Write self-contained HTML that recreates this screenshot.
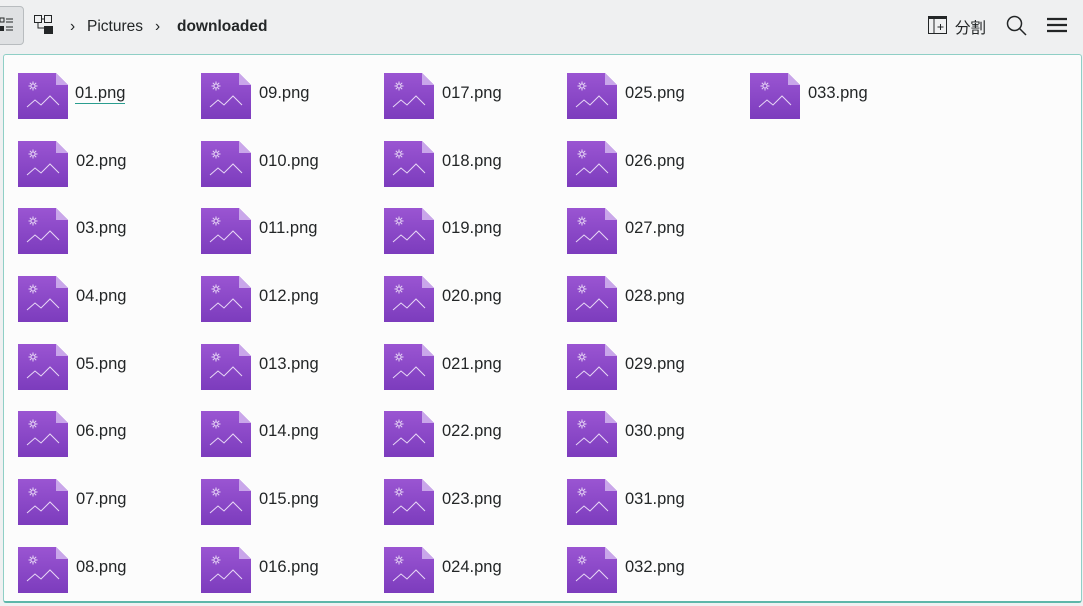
<!DOCTYPE html>
<html><head><meta charset="utf-8">
<style>
html,body{margin:0;padding:0;width:1083px;height:606px;overflow:hidden;background:#eff0f1;font-family:"Liberation Sans","Noto Sans CJK JP",sans-serif;color:#232627}
.tb{position:absolute;left:0;top:0;width:1083px;height:52px}
.frame{position:absolute;left:3px;top:54px;width:1077px;height:546px;background:#fcfcfc;border:1px solid #8fcfc6;border-bottom:2px solid #5db6a9;border-radius:3px}
.it{position:absolute;height:46px}
.it svg{position:absolute;left:0;top:0}
.it span{position:absolute;left:58px;top:11px;font-size:16.5px;white-space:nowrap}
</style></head><body>
<svg width="0" height="0" style="position:absolute"><defs>
<linearGradient id="g" x1="0" y1="0" x2="0" y2="1"><stop offset="0" stop-color="#9a55d2"/><stop offset="1" stop-color="#7c3cbd"/></linearGradient>
<symbol id="ic" viewBox="0 0 50 46">
<path d="M0 0H38L50 12V46H0Z" fill="url(#g)"/>
<path d="M38 0L50 12H38Z" fill="#c9a6ea"/>
<g stroke="#e8d8f6" stroke-width="1" fill="none">
<circle cx="15" cy="13" r="2"/>
<path d="M15 8.5v2M15 15.5v2M10.5 13h2M17.5 13h2M11.8 9.8l1.4 1.4M16.8 14.8l1.4 1.4M18.2 9.8l-1.4 1.4M13.2 14.8l-1.4 1.4"/>
<path d="M9 34L17 27L23 32L32 23L41 32"/>
</g></symbol></defs></svg>
<div class="tb">
<div style="position:absolute;left:-4px;top:6px;width:26px;height:37px;border:1px solid #b8bcbf;border-radius:4px;background:#dfe1e3"></div>
<svg style="position:absolute;left:0;top:17px" width="14" height="16"><rect x="0" y="1" width="4" height="4" fill="none" stroke="#232627"/><rect x="0" y="9" width="4" height="5" fill="#232627"/><path d="M6 2h7M6 5h7M6 10h7M6 13h7" stroke="#232627"/></svg>
<svg style="position:absolute;left:34px;top:15px" width="22" height="20"><rect x="0.5" y="0.5" width="7" height="7" fill="none" stroke="#232627"/><rect x="10.5" y="0.5" width="7" height="7" fill="none" stroke="#232627"/><path d="M8 4h2M4 8v5h6" stroke="#232627" fill="none"/><rect x="10" y="11" width="9" height="8" fill="#232627"/></svg>
<div style="position:absolute;left:70px;top:18px;font-size:15.5px">›</div>
<div style="position:absolute;left:87px;top:18px;font-size:15.5px">Pictures</div>
<div style="position:absolute;left:155px;top:18px;font-size:15.5px">›</div>
<div style="position:absolute;left:177px;top:18px;font-size:15.5px;font-weight:bold">downloaded</div>
<svg style="position:absolute;left:928px;top:16px" width="20" height="19"><rect x="0.5" y="0.5" width="18" height="17" fill="none" stroke="#232627"/><rect x="0" y="0" width="19" height="3" fill="#232627"/><path d="M6 3v15M12.5 8v6M9.5 11h6" stroke="#232627"/></svg>
<div style="position:absolute;left:955px;top:16px;font-size:15.5px">分割</div>
<svg style="position:absolute;left:1006px;top:15px" width="22" height="22"><circle cx="8.5" cy="8.5" r="7" fill="none" stroke="#232627" stroke-width="1.5"/><path d="M13.5 13.5L20 20" stroke="#232627" stroke-width="1.5"/></svg>
<svg style="position:absolute;left:1047px;top:17px" width="21" height="16"><path d="M0 2h20M0 8h20M0 14h20" stroke="#232627" stroke-width="2.2"/></svg>
</div>
<div class="frame"></div>

<div class="it" style="left:18px;top:73px"><svg width="50" height="46"><use href="#ic"/></svg><span style="border-bottom:1px solid #2a9d8f;left:57px">01.png</span></div>
<div class="it" style="left:18px;top:141px"><svg width="50" height="46"><use href="#ic"/></svg><span>02.png</span></div>
<div class="it" style="left:18px;top:208px"><svg width="50" height="46"><use href="#ic"/></svg><span>03.png</span></div>
<div class="it" style="left:18px;top:276px"><svg width="50" height="46"><use href="#ic"/></svg><span>04.png</span></div>
<div class="it" style="left:18px;top:344px"><svg width="50" height="46"><use href="#ic"/></svg><span>05.png</span></div>
<div class="it" style="left:18px;top:411px"><svg width="50" height="46"><use href="#ic"/></svg><span>06.png</span></div>
<div class="it" style="left:18px;top:479px"><svg width="50" height="46"><use href="#ic"/></svg><span>07.png</span></div>
<div class="it" style="left:18px;top:547px"><svg width="50" height="46"><use href="#ic"/></svg><span>08.png</span></div>

<div class="it" style="left:201px;top:73px"><svg width="50" height="46"><use href="#ic"/></svg><span>09.png</span></div>
<div class="it" style="left:201px;top:141px"><svg width="50" height="46"><use href="#ic"/></svg><span>010.png</span></div>
<div class="it" style="left:201px;top:208px"><svg width="50" height="46"><use href="#ic"/></svg><span>011.png</span></div>
<div class="it" style="left:201px;top:276px"><svg width="50" height="46"><use href="#ic"/></svg><span>012.png</span></div>
<div class="it" style="left:201px;top:344px"><svg width="50" height="46"><use href="#ic"/></svg><span>013.png</span></div>
<div class="it" style="left:201px;top:411px"><svg width="50" height="46"><use href="#ic"/></svg><span>014.png</span></div>
<div class="it" style="left:201px;top:479px"><svg width="50" height="46"><use href="#ic"/></svg><span>015.png</span></div>
<div class="it" style="left:201px;top:547px"><svg width="50" height="46"><use href="#ic"/></svg><span>016.png</span></div>

<div class="it" style="left:384px;top:73px"><svg width="50" height="46"><use href="#ic"/></svg><span>017.png</span></div>
<div class="it" style="left:384px;top:141px"><svg width="50" height="46"><use href="#ic"/></svg><span>018.png</span></div>
<div class="it" style="left:384px;top:208px"><svg width="50" height="46"><use href="#ic"/></svg><span>019.png</span></div>
<div class="it" style="left:384px;top:276px"><svg width="50" height="46"><use href="#ic"/></svg><span>020.png</span></div>
<div class="it" style="left:384px;top:344px"><svg width="50" height="46"><use href="#ic"/></svg><span>021.png</span></div>
<div class="it" style="left:384px;top:411px"><svg width="50" height="46"><use href="#ic"/></svg><span>022.png</span></div>
<div class="it" style="left:384px;top:479px"><svg width="50" height="46"><use href="#ic"/></svg><span>023.png</span></div>
<div class="it" style="left:384px;top:547px"><svg width="50" height="46"><use href="#ic"/></svg><span>024.png</span></div>

<div class="it" style="left:567px;top:73px"><svg width="50" height="46"><use href="#ic"/></svg><span>025.png</span></div>
<div class="it" style="left:567px;top:141px"><svg width="50" height="46"><use href="#ic"/></svg><span>026.png</span></div>
<div class="it" style="left:567px;top:208px"><svg width="50" height="46"><use href="#ic"/></svg><span>027.png</span></div>
<div class="it" style="left:567px;top:276px"><svg width="50" height="46"><use href="#ic"/></svg><span>028.png</span></div>
<div class="it" style="left:567px;top:344px"><svg width="50" height="46"><use href="#ic"/></svg><span>029.png</span></div>
<div class="it" style="left:567px;top:411px"><svg width="50" height="46"><use href="#ic"/></svg><span>030.png</span></div>
<div class="it" style="left:567px;top:479px"><svg width="50" height="46"><use href="#ic"/></svg><span>031.png</span></div>
<div class="it" style="left:567px;top:547px"><svg width="50" height="46"><use href="#ic"/></svg><span>032.png</span></div>

<div class="it" style="left:750px;top:73px"><svg width="50" height="46"><use href="#ic"/></svg><span>033.png</span></div>
</body></html>
